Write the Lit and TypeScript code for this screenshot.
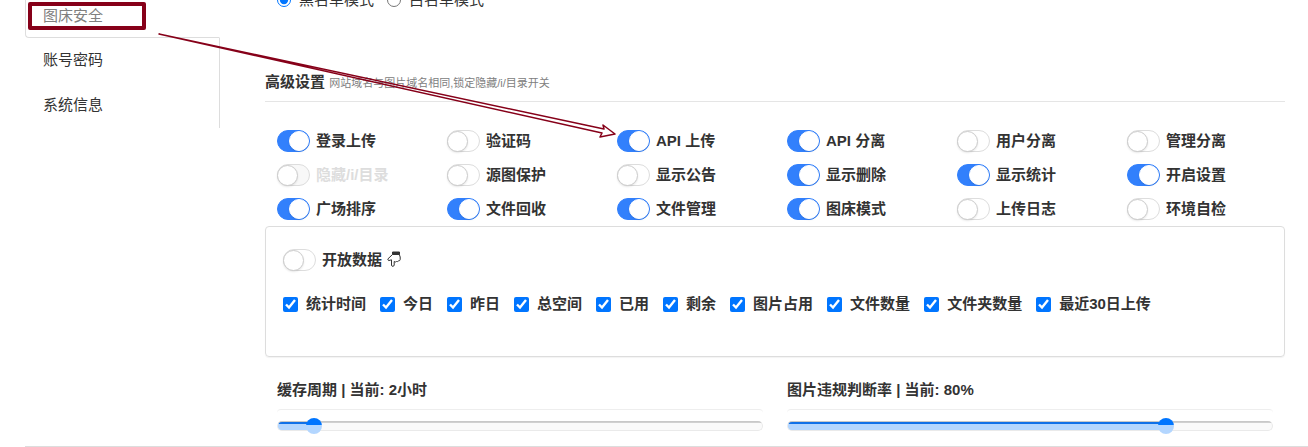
import { LitElement, html, css, svg } from "lit";
import { customElement, property } from "lit/decorators.js";

interface SwitchItem {
  id: string;
  label: string;
  on?: boolean;
  locked?: boolean;
}

const SWITCHES: SwitchItem[] = [
  { id: "login", label: "登录上传", on: true },
  { id: "captcha", label: "验证码" },
  { id: "api", label: "API 上传", on: true },
  { id: "api-split", label: "API 分离", on: true },
  { id: "user-split", label: "用户分离" },
  { id: "admin-split", label: "管理分离" },
  { id: "hide-dir", label: "隐藏/i/目录", locked: true },
  { id: "source", label: "源图保护" },
  { id: "notice", label: "显示公告" },
  { id: "delete", label: "显示删除", on: true },
  { id: "stats", label: "显示统计", on: true },
  { id: "settings", label: "开启设置", on: true },
  { id: "sort", label: "广场排序", on: true },
  { id: "recycle", label: "文件回收", on: true },
  { id: "manage", label: "文件管理", on: true },
  { id: "mode", label: "图床模式", on: true },
  { id: "log", label: "上传日志" },
  { id: "env", label: "环境自检" },
];

const OPEN_DATA = [
  "统计时间", "今日", "昨日", "总空间", "已用", "剩余",
  "图片占用", "文件数量", "文件夹数量", "最近30日上传",
];

@customElement("toggle-switch")
class ToggleSwitch extends LitElement {
  @property() label = "";
  @property({ type: Boolean }) on = false;
  @property({ type: Boolean }) locked = false;

  static styles = css`
    :host { display: block; }
    .switch { display: flex; align-items: center; gap: 6px; line-height: 22px; font-weight: 700; white-space: nowrap; }
    .input {
      appearance: none; flex: none; box-sizing: border-box; width: 33px; height: 22px; margin: 0;
      display: flex; align-items: center; border: 1px solid #ddd; border-radius: 11px; background: #fff;
    }
    .input::before {
      content: ""; box-sizing: border-box; width: 21px; height: 21px; margin-left: -1px; border-radius: 50%;
      border: 1px solid #ccc; background: #fff; box-shadow: 0 1px 2px rgba(0, 0, 0, 0.1);
    }
    .input:checked { justify-content: flex-end; border-color: #3280fc; background: #3280fc; }
    .input:checked::before { border-color: #fff; width: 20px; height: 20px; }
    .input:disabled { background: #f8f8f8; }
    .input:disabled + .text { color: #ddd; }
  `;

  render() {
    return html`<label class="switch">
      <input class="input" type="checkbox" .checked=${this.on} ?disabled=${this.locked} />
      <span class="text">${this.label}<slot></slot></span>
    </label>`;
  }
}

@customElement("range-field")
class RangeField extends LitElement {
  @property() label = "";
  @property({ type: Number }) value = 0;

  static styles = css`
    :host { display: block; min-width: 0; }
    .label { display: block; line-height: 20px; font-weight: 700; }
    .frame {
      margin-top: 9px; height: 32px; box-sizing: border-box;
      border-top: 1px solid #eee; border-radius: 4px;
    }
    .range { appearance: none; display: block; width: 100%; height: 32px; margin: 0; background: none; }
    .range::-webkit-slider-runnable-track {
      box-sizing: border-box; height: 10px; border: 1px solid #eaeaea; border-top-color: #c8c8c8; border-radius: 5px;
      background:
        linear-gradient(#0f70e8 2px, #b3d6ff 2px) 0 0 / var(--fill) 100% no-repeat,
        linear-gradient(#d0d0d0 1px, #fafafa 1px);
    }
    .range::-webkit-slider-thumb {
      appearance: none; width: 16px; height: 16px; margin-top: -4px; border-radius: 50%;
      background: linear-gradient(#0075ff 7px, #b3d6ff 7px);
    }
  `;

  render() {
    return html`
      <label class="label" for="range">${this.label}</label>
      <div class="frame">
        <input id="range" class="range" type="range" min="0" max="100" .value=${String(this.value)}
          style="--fill: ${this.value}%" />
      </div>`;
  }
}

@customElement("app-root")
class AppRoot extends LitElement {
  static styles = css`
    :host {
      display: block; position: relative; overflow: hidden; background: #fff; color: #333;
      font: 15px/20px "Liberation Sans", "Noto Sans CJK SC", sans-serif;
    }
    .page { display: flex; margin-left: 25px; padding-right: 23px; gap: 45px; }
    .nav { flex: none; width: 195px; }
    .tab { display: block; box-sizing: border-box; height: 45px; padding: 12px 18px; color: #333; text-decoration: none; border-right: 1px solid #ddd; }
    .tab.active {
      height: 38px; padding: 6px 17px; color: #808080; border: 1px solid #ddd; border-top: 0;
      border-right-color: transparent; border-radius: 0 0 0 4px;
    }
    .main { flex: 1; min-width: 0; }
    .modes { display: flex; gap: 13px; margin: -10px 0 62px 12px; }
    .mode { display: flex; align-items: center; gap: 8px; }
    .radio { width: 14px; height: 14px; margin: 0; }
    .heading { margin: 0; padding-bottom: 8px; border-bottom: 1px solid #e5e5e5; font-size: 15px; line-height: 20px; }
    .hint { color: #808080; font-size: 11px; font-weight: 400; }
    .switches { display: grid; grid-template-columns: repeat(6, 1fr); row-gap: 12px; padding: 28px 0 6px; }
    .switches toggle-switch { padding-left: 12px; }
    .panel { padding: 22px 17px 42px; border: 1px solid #ddd; border-radius: 4px; box-shadow: 0 1px 1px rgba(0, 0, 0, 0.05); }
    .hand { width: 14px; height: 16px; margin-left: 5px; vertical-align: -2px; }
    .checks { display: flex; flex-wrap: wrap; gap: 14px; margin-top: 23px; }
    .check { display: flex; align-items: center; gap: 8px; font-weight: 700; }
    .box { width: 15px; height: 15px; margin: 0; }
    .ranges { display: grid; grid-template-columns: 1fr 1fr; gap: 24px; padding: 23px 12px 5px; }
    .rule { height: 1px; margin: 0 0 0 25px; border: 0; background: #ddd; }
    .marks { position: absolute; left: 0; top: 0; pointer-events: none; }
  `;

  render() {
    return html`
      <div class="page">
        <nav class="nav">
          <a class="tab active" href="#security">图床安全</a>
          <a class="tab" href="#account">账号密码</a>
          <a class="tab" href="#system">系统信息</a>
        </nav>
        <main class="main">
          <div class="modes">
            <label class="mode"><input class="radio" type="radio" name="mode" checked />黑名单模式</label>
            <label class="mode"><input class="radio" type="radio" name="mode" />白名单模式</label>
          </div>
          <h2 class="heading">高级设置 <small class="hint">网站域名与图片域名相同,锁定隐藏/i/目录开关</small></h2>
          <div class="switches">
            ${SWITCHES.map((s) => html`<toggle-switch .label=${s.label} .on=${!!s.on} .locked=${!!s.locked}></toggle-switch>`)}
          </div>
          <section class="panel">
            <toggle-switch label="开放数据">${this.hand()}</toggle-switch>
            <div class="checks">
              ${OPEN_DATA.map((t) => html`<label class="check"><input class="box" type="checkbox" checked />${t}</label>`)}
            </div>
          </section>
          <div class="ranges">
            <range-field label="缓存周期 | 当前: 2小时" value="6"></range-field>
            <range-field label="图片违规判断率 | 当前: 80%" value="79"></range-field>
          </div>
        </main>
      </div>
      <hr class="rule" />
      ${this.marks()}
    `;
  }

  private hand() {
    return html`<svg class="hand" viewBox="0 0 14 16" fill="none" stroke="#333" stroke-linejoin="round" aria-hidden="true">
      <path d="M5.500 1h7v2.500h-7z" fill="#333" />
      <path d="M5.500 3.500 1 7.800q-.6 1.400.8 1.800L4.500 8.800V14q.2 1.400 1.300 1.400T7.200 14v-3.500q1.200 1 2.300 0 1.200.4 2-.6 1.500 0 1.700-1.400V6L12.300 3.500" />
    </svg>`;
  }

  private marks() {
    return svg`<svg class="marks" width="640" height="150" fill="none" stroke="#860019" aria-hidden="true">
      <rect x="30" y="4" width="114" height="24" stroke-width="4" stroke-linejoin="round" />
      <path d="M159 34 604 129 603 125 615 134 600 137 602 133Z" stroke-width="1.500" stroke-linejoin="round" />
    </svg>`;
  }
}
